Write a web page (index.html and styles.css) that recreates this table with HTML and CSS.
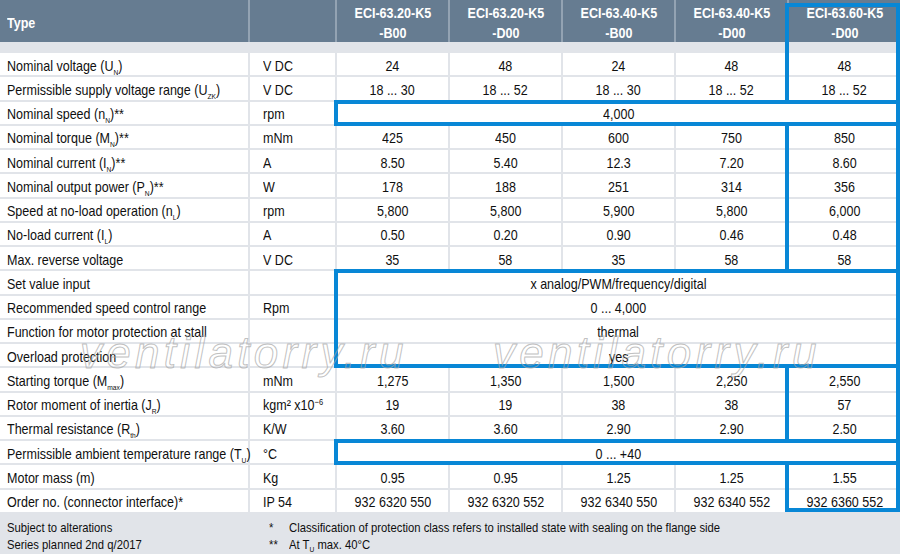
FILE: index.html
```html
<!DOCTYPE html>
<html lang="en">
<head>
<meta charset="utf-8">
<title>ECI-63 technical data</title>
<link rel="stylesheet" href="styles.css">
</head>
<body>
<div class="sheet">
  <div class="table">
    <div class="h type"><span>Type</span></div>
    <div class="h"></div>
    <div class="h"><span>ECI-63.20-K5<br>-B00</span></div>
    <div class="h"><span>ECI-63.20-K5<br>-D00</span></div>
    <div class="h"><span>ECI-63.40-K5<br>-B00</span></div>
    <div class="h"><span>ECI-63.40-K5<br>-D00</span></div>
    <div class="h last"><span>ECI-63.60-K5<br>-D00</span></div>
    <div class="band"></div>

    <div class="c l"><span>Nominal voltage (U<sub>N</sub>)</span></div><div class="c u"><span>V DC</span></div>
    <div class="c"><span>24</span></div><div class="c"><span>48</span></div><div class="c"><span>24</span></div><div class="c"><span>48</span></div><div class="c"><span>48</span></div>

    <div class="c l"><span>Permissible supply voltage range (U<sub>ZK</sub>)</span></div><div class="c u"><span>V DC</span></div>
    <div class="c"><span>18 ... 30</span></div><div class="c"><span>18 ... 52</span></div><div class="c"><span>18 ... 30</span></div><div class="c"><span>18 ... 52</span></div><div class="c"><span>18 ... 52</span></div>

    <div class="c l"><span>Nominal speed (n<sub>N</sub>)**</span></div><div class="c u"><span>rpm</span></div>
    <div class="c sp"><span>4,000</span></div>

    <div class="c l"><span>Nominal torque (M<sub>N</sub>)**</span></div><div class="c u"><span>mNm</span></div>
    <div class="c"><span>425</span></div><div class="c"><span>450</span></div><div class="c"><span>600</span></div><div class="c"><span>750</span></div><div class="c"><span>850</span></div>

    <div class="c l"><span>Nominal current (I<sub>N</sub>)**</span></div><div class="c u"><span>A</span></div>
    <div class="c"><span>8.50</span></div><div class="c"><span>5.40</span></div><div class="c"><span>12.3</span></div><div class="c"><span>7.20</span></div><div class="c"><span>8.60</span></div>

    <div class="c l"><span>Nominal output power (P<sub>N</sub>)**</span></div><div class="c u"><span>W</span></div>
    <div class="c"><span>178</span></div><div class="c"><span>188</span></div><div class="c"><span>251</span></div><div class="c"><span>314</span></div><div class="c"><span>356</span></div>

    <div class="c l"><span>Speed at no-load operation (n<sub>L</sub>)</span></div><div class="c u"><span>rpm</span></div>
    <div class="c"><span>5,800</span></div><div class="c"><span>5,800</span></div><div class="c"><span>5,900</span></div><div class="c"><span>5,800</span></div><div class="c"><span>6,000</span></div>

    <div class="c l"><span>No-load current (I<sub>L</sub>)</span></div><div class="c u"><span>A</span></div>
    <div class="c"><span>0.50</span></div><div class="c"><span>0.20</span></div><div class="c"><span>0.90</span></div><div class="c"><span>0.46</span></div><div class="c"><span>0.48</span></div>

    <div class="c l"><span>Max. reverse voltage</span></div><div class="c u"><span>V DC</span></div>
    <div class="c"><span>35</span></div><div class="c"><span>58</span></div><div class="c"><span>35</span></div><div class="c"><span>58</span></div><div class="c"><span>58</span></div>

    <div class="c l"><span>Set value input</span></div><div class="c u"></div>
    <div class="c sp"><span>x analog/PWM/frequency/digital</span></div>

    <div class="c l"><span>Recommended speed control range</span></div><div class="c u"><span>Rpm</span></div>
    <div class="c sp"><span>0 ... 4,000</span></div>

    <div class="c l"><span>Function for motor protection at stall</span></div><div class="c u"></div>
    <div class="c sp"><span>thermal</span></div>

    <div class="c l"><span>Overload protection</span></div><div class="c u"></div>
    <div class="c sp"><span>yes</span></div>

    <div class="c l"><span>Starting torque (M<sub>max</sub>)</span></div><div class="c u"><span>mNm</span></div>
    <div class="c"><span>1,275</span></div><div class="c"><span>1,350</span></div><div class="c"><span>1,500</span></div><div class="c"><span>2,250</span></div><div class="c"><span>2,550</span></div>

    <div class="c l"><span>Rotor moment of inertia (J<sub>R</sub>)</span></div><div class="c u"><span>kgm² x10<sup>−6</sup></span></div>
    <div class="c"><span>19</span></div><div class="c"><span>19</span></div><div class="c"><span>38</span></div><div class="c"><span>38</span></div><div class="c"><span>57</span></div>

    <div class="c l"><span>Thermal resistance (R<sub>th</sub>)</span></div><div class="c u"><span>K/W</span></div>
    <div class="c"><span>3.60</span></div><div class="c"><span>3.60</span></div><div class="c"><span>2.90</span></div><div class="c"><span>2.90</span></div><div class="c"><span>2.50</span></div>

    <div class="c l"><span>Permissible ambient temperature range (T<sub>U</sub>)</span></div><div class="c u"><span>°C</span></div>
    <div class="c sp"><span>0 ... +40</span></div>

    <div class="c l"><span>Motor mass (m)</span></div><div class="c u"><span>Kg</span></div>
    <div class="c"><span>0.95</span></div><div class="c"><span>0.95</span></div><div class="c"><span>1.25</span></div><div class="c"><span>1.25</span></div><div class="c"><span>1.55</span></div>

    <div class="c l"><span>Order no. (connector interface)*</span></div><div class="c u"><span>IP 54</span></div>
    <div class="c"><span>932 6320 550</span></div><div class="c"><span>932 6320 552</span></div><div class="c"><span>932 6340 550</span></div><div class="c"><span>932 6340 552</span></div><div class="c"><span>932 6360 552</span></div>

    <div class="frame col fa"></div>
    <div class="frame spanf fb"></div>
    <div class="frame col fc"></div>
    <div class="frame spanf fd"></div>
    <div class="frame col fe"></div>
    <div class="frame spanf ff"></div>
    <div class="frame col fg"></div>

    <div class="wm wm1">ventilatorry.ru</div>
    <div class="wm wm2">ventilatorry.ru</div>
  </div>

  <div class="foot">
    <div><span>Subject to alterations</span></div>
    <div><span>*</span></div>
    <div><span>Classification of protection class refers to installed state with sealing on the flange side</span></div>
    <div><span>Series planned 2nd q/2017</span></div>
    <div><span>**</span></div>
    <div><span>At T<sub>U</sub> max. 40°C</span></div>
  </div>
</div>
</body>
</html>
```

FILE: styles.css
```css
html, body {
  margin: 0;
  padding: 0;
  background: #ffffff;
}

body {
  font-family: "Liberation Sans", Arial, sans-serif;
  color: #0f0f0f;
  width: 900px;
  height: 554px;
  overflow: hidden;
}

.sheet {
  width: 900px;
}

.table {
  position: relative;
  display: grid;
  grid-template-columns: 248px 85px repeat(5, 111px);
  grid-template-rows: 42px 7px repeat(19, 22.26px);
  gap: 2px;
  background: #e1e4e9;
}

/* condensed look: Liberation Sans narrowed like Arial Narrow */
.h > span,
.c > span,
.foot span {
  display: inline-block;
  white-space: nowrap;
  transform: scaleX(0.835);
}

.h {
  background: #667c91;
  color: #ffffff;
  font-weight: bold;
  font-size: 15px;
  line-height: 20px;
  padding-top: 3px;
  box-sizing: border-box;
  display: flex;
  align-items: center;
  justify-content: center;
  text-align: center;
  box-shadow: 2px 0 0 #93a3b3;
}

.h > span {
  transform-origin: center center;
}

.h.type {
  justify-content: flex-start;
  padding-left: 7px;
}

.h.type > span {
  transform-origin: left center;
}

.h.last {
  box-shadow: none;
}

.band {
  grid-column: 1 / -1;
  background: #e1e4e9;
}

.c {
  background: #ffffff;
  font-size: 15px;
  line-height: 17px;
  padding-top: 2px;
  box-sizing: border-box;
  display: flex;
  align-items: center;
  justify-content: center;
  white-space: nowrap;
}

.c > span {
  transform-origin: center center;
}

.c.l {
  justify-content: flex-start;
  padding-left: 7px;
}

.c.u {
  justify-content: flex-start;
  padding-left: 13px;
}

.c.l > span,
.c.u > span {
  transform-origin: left center;
}

.c.sp {
  grid-column: span 5;
}

sub {
  font-size: 8px;
  line-height: 0;
  vertical-align: -4px;
}

sup {
  font-size: 9px;
  line-height: 0;
  vertical-align: 5px;
}

/* blue highlight frames */
.frame {
  position: absolute;
  border: 4px solid #0887d6;
  box-sizing: border-box;
  pointer-events: none;
  z-index: 2;
}

.col {
  grid-column: 7 / 8;
  left: -4px;
  right: 0;
  top: -2px;
  bottom: -2px;
  border-top-width: 0;
  border-bottom-width: 0;
}

.spanf {
  grid-column: 3 / 8;
  left: -3px;
  right: 0;
  top: -2px;
  bottom: -2px;
}

.fa {
  grid-row: 1 / 5;
  top: 3px;
  border-top-width: 4px;
}

.fb { grid-row: 5 / 6; }
.fc { grid-row: 6 / 12; }
.fd { grid-row: 12 / 16; }
.fe { grid-row: 16 / 19; }
.ff { grid-row: 19 / 20; }

.fg {
  grid-row: 20 / 22;
  bottom: 0;
  border-bottom-width: 4px;
}

/* watermark */
.wm {
  position: absolute;
  top: 331px;
  font-family: "Liberation Sans", sans-serif;
  font-style: italic;
  font-size: 44px;
  line-height: 44px;
  letter-spacing: 4.3px;
  color: transparent;
  -webkit-text-stroke: 1px rgba(165, 165, 165, 0.7);
  z-index: 3;
  pointer-events: none;
  white-space: nowrap;
}

.wm1 { left: 80px; }
.wm2 { left: 493px; }

/* footer */
.foot {
  background: #e1e4e9;
  height: 42px;
  box-sizing: border-box;
  padding: 8px 0 0 7px;
  display: grid;
  grid-template-columns: 262px 20px auto;
  font-size: 13.5px;
  line-height: 16px;
  white-space: nowrap;
}

.foot span {
  transform-origin: left center;
}

.foot sub {
  font-size: 8px;
  vertical-align: -3px;
}
```
